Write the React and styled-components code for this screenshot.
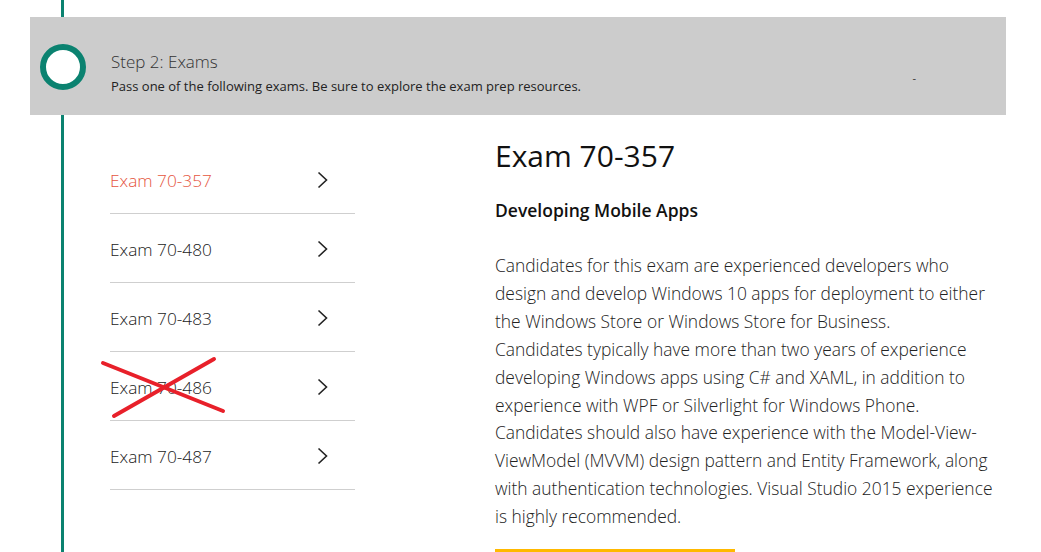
import React from "react";
import styled, { createGlobalStyle } from "styled-components";

const Global = createGlobalStyle`
  body {
    margin: 0;
    background: #ffffff;
    font-family: "Open Sans", "Noto Sans", sans-serif;
    color: #222;
  }
`;

const exams = ["70-357", "70-480", "70-483", "70-486", "70-487"];

const lines = [
  "Candidates for this exam are experienced developers who",
  "design and develop Windows 10 apps for deployment to either",
  "the Windows Store or Windows Store for Business.",
  "Candidates typically have more than two years of experience",
  "developing Windows apps using C# and XAML, in addition to",
  "experience with WPF or Silverlight for Windows Phone.",
  "Candidates should also have experience with the Model-View-",
  "ViewModel (MVVM) design pattern and Entity Framework, along",
  "with authentication technologies. Visual Studio 2015 experience",
  "is highly recommended.",
];

function Chevron() {
  return (
    <svg width="12" height="18" viewBox="0 0 12 18">
      <path d="M1.5 1.5 L9.5 9 L1.5 16.5" fill="none" stroke="#222" strokeWidth="1.6" />
    </svg>
  );
}

function Cross() {
  return (
    <CrossMark width="128" height="66" viewBox="0 0 128 66">
      <line x1="3" y1="8" x2="123" y2="56" stroke="#e8202a" strokeWidth="4" strokeLinecap="round" />
      <line x1="14" y1="61" x2="114" y2="4" stroke="#e8202a" strokeWidth="4" strokeLinecap="round" />
    </CrossMark>
  );
}

export default function App() {
  return (
    <Page>
      <Global />
      <StepBand>
        <StepDot />
        <StepText>
          <StepTitle>Step 2: Exams</StepTitle>
          <StepSub>Pass one of the following exams. Be sure to explore the exam prep resources.</StepSub>
        </StepText>
        <Dash>-</Dash>
      </StepBand>
      <Body>
        <ExamList>
          {exams.map((e, i) => (
            <ExamRow key={e} $active={i === 0}>
              <span>Exam {e}</span>
              <Chevron />
              {e === "70-486" && <Cross />}
            </ExamRow>
          ))}
        </ExamList>
        <Detail>
          <DetailTitle>Exam 70-357</DetailTitle>
          <DetailSub>Developing Mobile Apps</DetailSub>
          <DetailText>
            {lines.map((l, i) => (
              <span key={i}>
                {l}
                <br />
              </span>
            ))}
          </DetailText>
          <YellowBar />
        </Detail>
      </Body>
    </Page>
  );
}

const Page = styled.div`
  position: relative;
  width: 1041px;
  height: 552px;
  overflow: hidden;
  padding-top: 17px;
  box-sizing: border-box;

  &::before {
    content: "";
    position: absolute;
    left: 61px;
    top: 0;
    bottom: 0;
    width: 3px;
    background: #0b8270;
  }
`;

const StepBand = styled.div`
  position: relative;
  margin-left: 30px;
  width: 976px;
  height: 98px;
  background: #cccccc;
  display: flex;
  align-items: center;
  padding-left: 10px;
  box-sizing: border-box;
`;

const StepDot = styled.div`
  position: relative;
  z-index: 1;
  width: 46px;
  height: 46px;
  margin-top: 2px;
  border-radius: 50%;
  border: 6px solid #0b8270;
  background: #ffffff;
  box-sizing: border-box;
  flex-shrink: 0;
`;

const StepText = styled.div`
  align-self: flex-start;
  margin-top: 33px;
  margin-left: 25px;
  display: flex;
  flex-direction: column;
  flex: 1;
`;

const StepTitle = styled.div`
  font-size: 17px;
  font-weight: 300;
  color: #333;
  line-height: 24px;
`;

const StepSub = styled.div`
  margin-top: 3px;
  font-size: 13px;
  color: #222;
  line-height: 18px;
`;

const Dash = styled.div`
  font-size: 11px;
  color: #333;
  margin-right: 90px;
  margin-top: 22px;
`;

const Body = styled.div`
  display: flex;
  padding-left: 110px;
  padding-top: 30px;
`;

const ExamList = styled.div`
  width: 245px;
  display: flex;
  flex-direction: column;
`;

const ExamRow = styled.div`
  position: relative;
  height: 69px;
  display: flex;
  align-items: center;
  justify-content: space-between;
  padding-right: 26px;
  border-bottom: 1px solid #cfcfcf;
  box-sizing: border-box;
  font-size: 17.3px;
  font-weight: 300;
  color: ${(p) => (p.$active ? "#e5553e" : "#222")};
  padding-top: 2px;
`;

const CrossMark = styled.svg`
  position: absolute;
  left: -10px;
  top: 3px;
`;

const Detail = styled.div`
  margin-left: 140px;
  display: flex;
  flex-direction: column;
`;

const DetailTitle = styled.h1`
  margin: -11px 0 0;
  font-size: 30px;
  font-weight: 400;
  color: #111;
  line-height: 44px;
`;

const DetailSub = styled.div`
  margin-top: 20px;
  font-size: 17.5px;
  font-weight: 600;
  color: #111;
`;

const DetailText = styled.p`
  margin: 30px 0 0;
  font-size: 17.4px;
  font-weight: 300;
  line-height: 27.9px;
  color: #222;
  white-space: nowrap;
`;

const YellowBar = styled.div`
  margin-top: 18px;
  width: 240px;
  height: 4px;
  background: #ffb900;
`;
